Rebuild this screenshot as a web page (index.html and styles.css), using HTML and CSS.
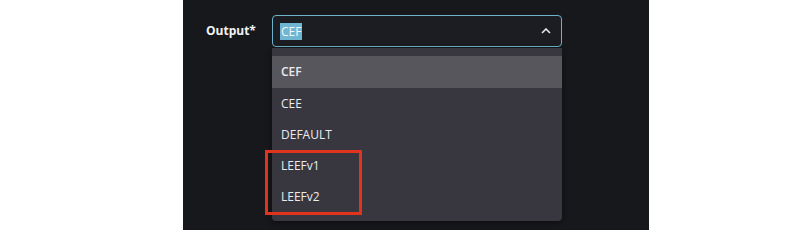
FILE: index.html
```html
<!DOCTYPE html>
<html lang="en">
<head>
<meta charset="UTF-8" />
<title>Output select</title>
<link rel="stylesheet" href="styles.css">
</head>
<body>
  <div class="panel">
    <div class="field">
      <label class="field-label" for="output">Output*</label>
      <div class="select">
        <div class="select-box" id="output">
          <span class="select-value">CEF</span>
          <svg class="chevron" width="10" height="6" viewBox="0 0 10 6"><path d="M1 5 L5 1 L9 5" fill="none" stroke="#e8e8ea" stroke-width="1.6"/></svg>
        </div>
        <ul class="menu">
          <li class="menu-item active">CEF</li>
          <li class="menu-item">CEE</li>
          <li class="menu-item">DEFAULT</li>
          <li class="menu-item">LEEFv1</li>
          <li class="menu-item">LEEFv2</li>
        </ul>
        <div class="highlight"></div>
      </div>
    </div>
  </div>
</body>
</html>
```

FILE: styles.css
```css
* {
  box-sizing: border-box;
}
body {
  margin: 0;
  background: #fff;
  font-family: 'Open Sans', 'Noto Sans', sans-serif;
  color: #ececee;
}
.panel {
  margin-left: 183px;
  width: 466px;
  height: 230px;
  background: #17181c;
  padding-top: 15px;
}
.field {
  display: flex;
  align-items: flex-start;
}
.field-label {
  width: 89px;
  padding-left: 23px;
  padding-top: 7px;
  font-size: 12px;
  font-weight: 700;
  color: #f2f2f4;
}
.select {
  position: relative;
  width: 290px;
}
.select-box {
  height: 32px;
  border: 1px solid #6cb2c8;
  border-radius: 4px;
  background: #1c1d22;
  display: flex;
  align-items: center;
  justify-content: space-between;
  padding: 0 10px 0 7px;
}
.select-value {
  background: #6fb6d2;
  color: #f4f8fa;
  font-size: 12px;
  line-height: 17px;
  padding: 0 1px;
}
.menu {
  list-style: none;
  margin: 1px 0 0;
  padding: 8px 0 9px;
  background: #38373f;
  border-radius: 0 0 4px 4px;
  box-shadow: 0 2px 6px rgba(0,0,0,0.4);
}
.menu-item {
  height: 31px;
  line-height: 31px;
  padding-left: 9px;
  font-size: 12px;
  color: #ecebee;
}
.menu-item.active {
  background: #57565d;
  height: 32px;
  line-height: 32px;
  font-weight: 600;
}
.highlight {
  position: absolute;
  left: -7px;
  top: 135px;
  width: 97px;
  height: 65px;
  border: 3px solid #e0341c;
}
```
